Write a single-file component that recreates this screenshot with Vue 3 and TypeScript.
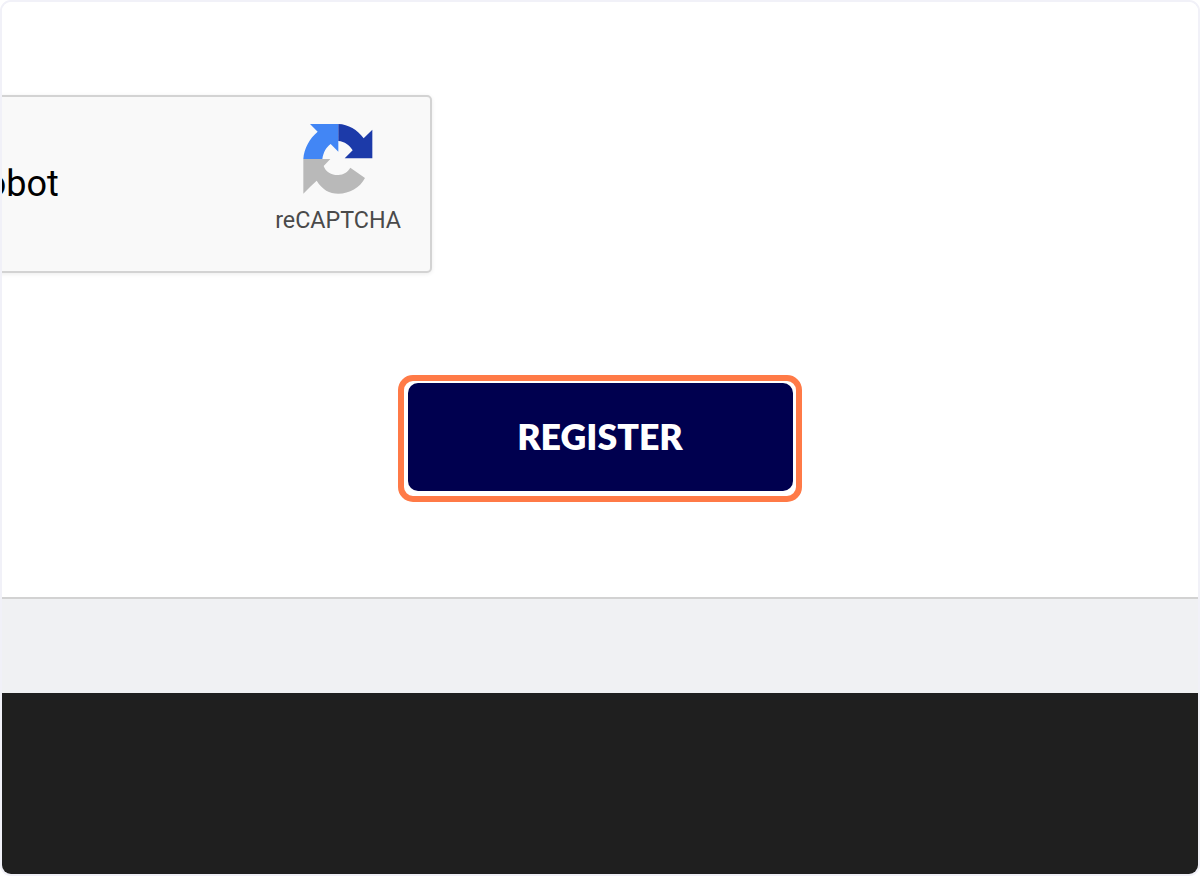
<script setup lang="ts">
const label: string = "I'm not a robot";
const brand: string = "reCAPTCHA";
const action: string = "REGISTER";
</script>

<template>
  <div class="frame">
    <main class="card">
      <section class="captcha">
        <span class="captcha-label">{{ label }}</span>
        <div class="brand">
          <svg class="logo" viewBox="0 0 255 255" width="85" height="85" aria-hidden="true">
            <path fill="#b9b9b9" d="M25 132H106L86 153C92 172 112 181 130 180C146 179 158 171 166 158L210 189C194 219 164 236 130 236C103 236 82 224 65 197L45 216L25 236Z" />
            <path fill="#4286f5" d="M25 132C27 100 44 70 68 50L45 27H130V110L107 87C94 96 85 112 82 132Z" />
            <path fill="#1c3aa9" d="M130 27C160 28 187 44 206 70L232 44V130H149L173 106C164 90 149 80 130 78Z" />
          </svg>
          <span class="brand-name">{{ brand }}</span>
        </div>
      </section>
      <div class="action">
        <div class="highlight">
          <button class="register" type="button">{{ action }}</button>
        </div>
      </div>
    </main>
    <div class="band"></div>
    <footer class="footer"></footer>
  </div>
</template>

<style>
html,
body {
  margin: 0;
  background: #ffffff;
}
</style>

<style scoped>
.frame {
  box-sizing: border-box;
  width: 1200px;
  height: 876px;
  border: 2px solid #f1f1f8;
  border-radius: 11px;
  overflow: hidden;
  display: flex;
  flex-direction: column;
  background: #ffffff;
}

.card {
  box-sizing: border-box;
  height: 597px;
  flex: none;
  padding-top: 93px;
  background: #ffffff;
  border-bottom: 2px solid #d2d2d2;
}

.captcha {
  box-sizing: border-box;
  width: 502px;
  height: 178px;
  margin-left: -72px;
  padding: 0 29px 0 0;
  display: flex;
  align-items: center;
  justify-content: space-between;
  background: #f9f9f9;
  border: 2px solid #d3d3d3;
  border-radius: 5px;
  box-shadow: 0 1px 4px rgba(0, 0, 0, 0.08);
}

.captcha-label {
  margin-left: -104px;
  margin-top: -1px;
  font-family: Roboto, sans-serif;
  font-size: 36px;
  color: #000000;
  white-space: nowrap;
}

.brand {
  display: flex;
  flex-direction: column;
  align-items: center;
  margin-top: 0;
  margin-bottom: 27px;
}

.logo {
  display: block;
  margin-top: 6px;
  margin-right: 2px;
  margin-bottom: 7px;
  filter: blur(0.5px);
}

.brand-name {
  font-family: Roboto, sans-serif;
  font-size: 23.3px;
  line-height: 26px;
  color: #4a4a4a;
}

.action {
  display: flex;
  justify-content: center;
  margin-top: 102px;
}

.highlight {
  box-sizing: border-box;
  width: 404px;
  height: 127px;
  padding: 2px 3px 5px 4px;
  border: 6px solid #ff7a47;
  border-radius: 15px;
  background: #ffffff;
  margin-left: -1px;
}

.register {
  box-sizing: border-box;
  display: block;
  width: 100%;
  height: 100%;
  border: 0;
  border-radius: 10px;
  background: #00004f;
  color: #ffffff;
  font-family: Lato, sans-serif;
  font-size: 35.7px;
  font-weight: 800;
  padding: 0 0 2px;
}

.band {
  height: 94px;
  flex: none;
  background: #f0f1f3;
}

.footer {
  flex: 1;
  background: #1f1f1f;
}
</style>
